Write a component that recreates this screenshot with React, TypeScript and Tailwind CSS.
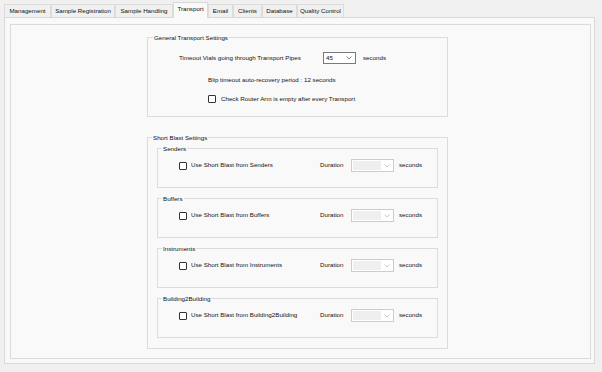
import React from "react";

const tabs: { name: string; w: string; active?: boolean }[] = [
  { name: "Management", w: "w-[47px]" },
  { name: "Sample Registration", w: "w-[64px]" },
  { name: "Sample Handling", w: "w-[58px]" },
  { name: "Transport", w: "w-[35px]", active: true },
  { name: "Email", w: "w-[25px]" },
  { name: "Clients", w: "w-[29px]" },
  { name: "Database", w: "w-[35px]" },
  { name: "Quality Control", w: "w-[47px]" },
];

function Chevron({ color }: { color: string }) {
  return (
    <svg width="6" height="4" viewBox="0 0 6 4" className="shrink-0">
      <polyline points="0.5,0.5 3,3 5.5,0.5" fill="none" stroke={color} strokeWidth="0.8" />
    </svg>
  );
}

function Checkbox() {
  return <div className="w-[8px] h-[8px] border border-[#333333] bg-white rounded-[1px] shrink-0" />;
}

function DisabledCombo() {
  return (
    <div className="w-[43px] h-[13px] border border-[#cccccc] bg-white flex items-center pl-[1px] pr-[3px] gap-[3px]">
      <div className="w-[29px] h-[9px] bg-[#efefef]" />
      <Chevron color="#bdbdbd" />
    </div>
  );
}

function SubGroup({ title, label }: { title: string; label: string }) {
  return (
    <div className="relative h-[40px] border border-[#dcdcdc] pt-[10px] pl-[21px]">
      <div className="absolute left-[4px] top-[-5px] px-[1px] bg-[#f9f9f9] leading-[9px]">{title}</div>
      <div className="flex items-center h-[13px]">
        <div className="w-[141px] flex items-center gap-[4px]">
          <Checkbox />
          <span>{label}</span>
        </div>
        <span className="w-[31px]">Duration</span>
        <DisabledCombo />
        <span className="ml-[5px]">seconds</span>
      </div>
    </div>
  );
}

export default function App() {
  return (
    <div className="w-[602px] h-[372px] bg-[#f0f0f0] pt-[4px] pl-[4px] text-[6.2px] text-[#111111] font-['Liberation_Sans',Arial,sans-serif] leading-none overflow-hidden">
      <div className="flex items-end h-[13px] relative z-10">
        {tabs.map((t) =>
          t.active ? (
            <div
              key={t.name}
              className={`${t.w} h-[16px] -mb-[1px] bg-[#f9f9f9] border border-b-0 border-[#d9d9d9] flex items-start justify-center pt-[3px] whitespace-nowrap`}
            >
              {t.name}
            </div>
          ) : (
            <div
              key={t.name}
              className={`${t.w} h-[13px] bg-[#f0f0f0] border border-b-0 border-[#dcdcdc] flex items-center justify-center whitespace-nowrap`}
            >
              {t.name}
            </div>
          )
        )}
      </div>
      <div className="w-[591px] h-[347px] border border-[#d9d9d9] bg-[#f9f9f9] pt-[6px] pl-[5px]">
        <div className="w-[581px] h-[335px] border border-[#dadada] bg-[#f9f9f9] pl-[136px] pt-[12px] flex flex-col">
          {/* General Transport Settings */}
          <div className="relative w-[301px] h-[80px] border border-[#dcdcdc] flex flex-col">
            <div className="absolute left-[5px] top-[-5px] px-[1px] bg-[#f9f9f9] leading-[9px]">General Transport Settings</div>
            <div className="flex items-center h-[12px] mt-[14px] pl-[31px]">
              <span className="w-[144px]">Timeout Vials going through Transport Pipes</span>
              <div className="w-[33px] h-[12px] border border-[#7a7a7a] bg-white flex items-center justify-between pl-[2px] pr-[3px]">
                <span>45</span>
                <Chevron color="#606060" />
              </div>
              <span className="ml-[7px]">seconds</span>
            </div>
            <div className="flex items-center h-[10px] mt-[11px] pl-[60px]">
              <span>Blip timeout auto-recovery period : 12 seconds</span>
            </div>
            <div className="flex items-center h-[10px] mt-[9px] pl-[60px] gap-[5px]">
              <Checkbox />
              <span>Check Router Arm is empty after every Transport</span>
            </div>
          </div>

          {/* Short Blast Settings */}
          <div className="relative w-[301px] h-[212px] mt-[20px] border border-[#dcdcdc] pt-[10px] px-[9px] flex flex-col gap-[10px]">
            <div className="absolute left-[4px] top-[-5px] px-[1px] bg-[#f9f9f9] leading-[9px]">Short Blast Settings</div>
            <SubGroup title="Senders" label="Use Short Blast from Senders" />
            <SubGroup title="Buffers" label="Use Short Blast from Buffers" />
            <SubGroup title="Instruments" label="Use Short Blast from Instruments" />
            <SubGroup title="Building2Building" label="Use Short Blast from Building2Building" />
          </div>
        </div>
      </div>
    </div>
  );
}
